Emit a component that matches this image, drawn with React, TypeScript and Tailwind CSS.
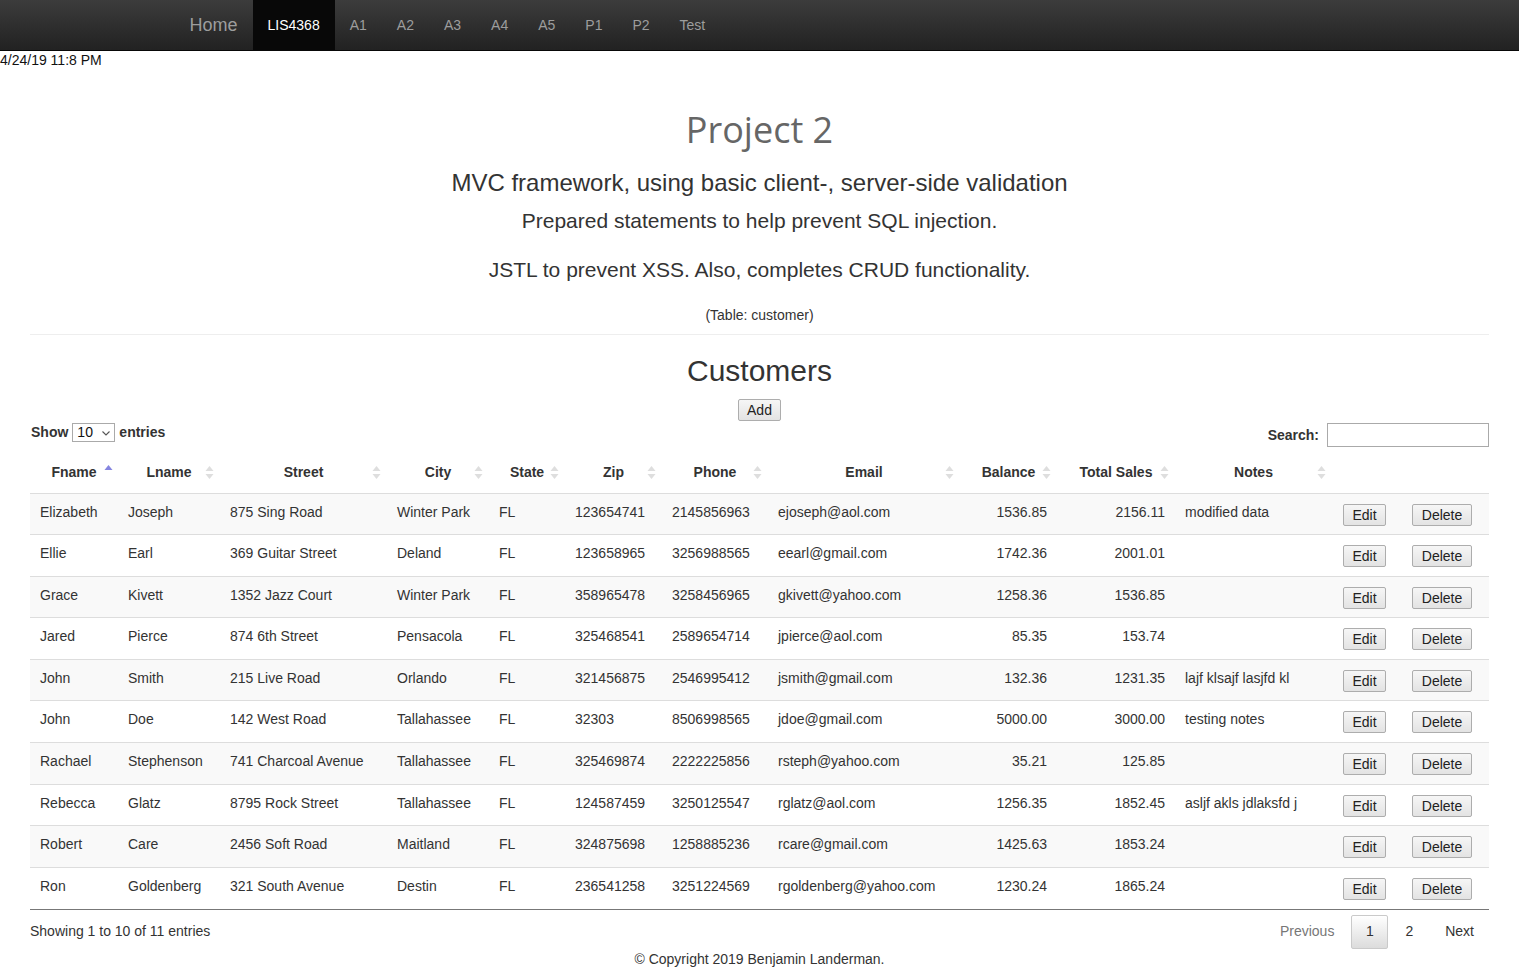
import React from "react";

type Customer = {
  fname: string;
  lname: string;
  street: string;
  city: string;
  state: string;
  zip: string;
  phone: string;
  email: string;
  balance: string;
  sales: string;
  notes: string;
};

const customers: Customer[] = [
  { fname: "Elizabeth", lname: "Joseph", street: "875 Sing Road", city: "Winter Park", state: "FL", zip: "123654741", phone: "2145856963", email: "ejoseph@aol.com", balance: "1536.85", sales: "2156.11", notes: "modified data" },
  { fname: "Ellie", lname: "Earl", street: "369 Guitar Street", city: "Deland", state: "FL", zip: "123658965", phone: "3256988565", email: "eearl@gmail.com", balance: "1742.36", sales: "2001.01", notes: "" },
  { fname: "Grace", lname: "Kivett", street: "1352 Jazz Court", city: "Winter Park", state: "FL", zip: "358965478", phone: "3258456965", email: "gkivett@yahoo.com", balance: "1258.36", sales: "1536.85", notes: "" },
  { fname: "Jared", lname: "Pierce", street: "874 6th Street", city: "Pensacola", state: "FL", zip: "325468541", phone: "2589654714", email: "jpierce@aol.com", balance: "85.35", sales: "153.74", notes: "" },
  { fname: "John", lname: "Smith", street: "215 Live Road", city: "Orlando", state: "FL", zip: "321456875", phone: "2546995412", email: "jsmith@gmail.com", balance: "132.36", sales: "1231.35", notes: "lajf klsajf lasjfd kl" },
  { fname: "John", lname: "Doe", street: "142 West Road", city: "Tallahassee", state: "FL", zip: "32303", phone: "8506998565", email: "jdoe@gmail.com", balance: "5000.00", sales: "3000.00", notes: "testing notes" },
  { fname: "Rachael", lname: "Stephenson", street: "741 Charcoal Avenue", city: "Tallahassee", state: "FL", zip: "325469874", phone: "2222225856", email: "rsteph@yahoo.com", balance: "35.21", sales: "125.85", notes: "" },
  { fname: "Rebecca", lname: "Glatz", street: "8795 Rock Street", city: "Tallahassee", state: "FL", zip: "124587459", phone: "3250125547", email: "rglatz@aol.com", balance: "1256.35", sales: "1852.45", notes: "asljf akls jdlaksfd j" },
  { fname: "Robert", lname: "Care", street: "2456 Soft Road", city: "Maitland", state: "FL", zip: "324875698", phone: "1258885236", email: "rcare@gmail.com", balance: "1425.63", sales: "1853.24", notes: "" },
  { fname: "Ron", lname: "Goldenberg", street: "321 South Avenue", city: "Destin", state: "FL", zip: "236541258", phone: "3251224569", email: "rgoldenberg@yahoo.com", balance: "1230.24", sales: "1865.24", notes: "" },
];

const navItems = ["A1", "A2", "A3", "A4", "A5", "P1", "P2", "Test"];

const headers = [
  { label: "Fname", w: "w-[88px]", active: true },
  { label: "Lname", w: "w-[102px]" },
  { label: "Street", w: "w-[167px]" },
  { label: "City", w: "w-[102px]" },
  { label: "State", w: "w-[76px]" },
  { label: "Zip", w: "w-[97px]" },
  { label: "Phone", w: "w-[106px]" },
  { label: "Email", w: "w-[192px]" },
  { label: "Balance", w: "w-[97px]" },
  { label: "Total Sales", w: "w-[118px]" },
  { label: "Notes", w: "w-[157px]" },
];

function SortIcon({ active }: { active?: boolean }) {
  if (active) {
    return (
      <svg width="9" height="18" viewBox="0 0 9 18" className="absolute right-[5px] top-[8px]">
        <polygon points="4.5,2 8.5,7 0.5,7" fill="#8585e0" />
      </svg>
    );
  }
  return (
    <svg width="9" height="18" viewBox="0 0 9 18" className="absolute right-[6px] top-[9px]">
      <polygon points="4.5,2 8.5,7 0.5,7" fill="#dedede" />
      <polygon points="0.5,10 8.5,10 4.5,15" fill="#dedede" />
    </svg>
  );
}

function Btn({ children, w }: { children: React.ReactNode; w: string }) {
  return (
    <button className={`${w} h-[22px] text-[14px] leading-[20px] text-[#222] border border-[#adadad] bg-gradient-to-b from-[#f6f6f6] to-[#e3e3e3] rounded-[2px]`}>
      {children}
    </button>
  );
}

export default function App() {
  return (
    <div className="min-h-screen bg-white text-[#333] font-['Liberation_Sans',Arial,sans-serif] text-[14px]">
      {/* navbar */}
      <nav className="h-[51px] bg-gradient-to-b from-[#3c3c3c] to-[#222] border-b border-[#080808]">
        <div className="w-[1140px] mx-auto flex h-[50px] items-stretch">
          <span className="pr-[15px] flex items-center text-[18px] text-[#9d9d9d]">Home</span>
          <span className="px-[15px] flex items-center bg-[#080808] text-white">LIS4368</span>
          {navItems.map((n) => (
            <span key={n} className="px-[15px] flex items-center text-[#9d9d9d]">
              {n}
            </span>
          ))}
        </div>
      </nav>

      <div className="text-[14px] leading-[18px] text-[#111]">4/24/19 11:8 PM</div>

      {/* intro */}
      <div className="px-[30px] text-center">
        <h1 className="mt-[41px] text-[36px] leading-[40px] text-[#666] font-['Open_Sans',sans-serif]">Project 2</h1>
        <p className="mt-[18px] text-[24px] leading-[30px]">MVC framework, using basic client-, server-side validation</p>
        <p className="mt-[10px] text-[21px] leading-[26px]">Prepared statements to help prevent SQL injection.</p>
        <p className="mt-[23px] text-[21px] leading-[26px]">JSTL to prevent XSS. Also, completes CRUD functionality.</p>
        <p className="mt-[22px] leading-[20px]">(Table: customer)</p>
        <hr className="mt-[9px] border-t border-[#eee]" />
        <h2 className="mt-[18px] text-[30px] leading-[36px]">Customers</h2>
        <div className="mt-[10px] flex justify-center">
          <button className="h-[22px] w-[43px] text-[14px] leading-[20px] text-[#222] border border-[#adadad] bg-gradient-to-b from-[#f6f6f6] to-[#e3e3e3] rounded-[2px]">
            Add
          </button>
        </div>
      </div>

      {/* table controls */}
      <div className="px-[30px] mt-[2px] flex justify-between items-start">
        <div className="flex items-center gap-[4px] font-bold h-[19px]">
          <span className="pl-[1px]">Show</span>
          <div className="relative h-[19px] w-[43px] border border-[#aaa] font-normal flex items-center pl-[4px] text-[14px] text-[#111]">
            10
            <svg width="8" height="5" viewBox="0 0 8 5" className="absolute right-[4px] top-[7px]">
              <polyline points="0.5,0.5 4,4 7.5,0.5" fill="none" stroke="#555" strokeWidth="1.1" />
            </svg>
          </div>
          <span>entries</span>
        </div>
        <div className="flex items-center gap-[8px] font-bold">
          <span>Search:</span>
          <div className="h-[24px] w-[162px] border border-[#aaa] bg-white" />
        </div>
      </div>

      {/* table */}
      <div className="px-[30px] mt-[8px]">
        <table className="w-full table-fixed border-collapse">
          <colgroup>
            {headers.map((h) => (
              <col key={h.label} className={h.w} />
            ))}
            <col className="w-[68px]" />
            <col className="w-[89px]" />
          </colgroup>
          <thead>
            <tr className="h-[38px] border-b border-[#ddd]">
              {headers.map((h) => (
                <th key={h.label} className="relative px-[10px] text-center font-bold text-[14px] leading-[20px] pb-[4px]">
                  {h.label}
                  <SortIcon active={h.active} />
                </th>
              ))}
              <th />
              <th />
            </tr>
          </thead>
          <tbody>
            {customers.map((c, i) => (
              <tr
                key={i}
                className={`h-[41.6px] ${i === 0 ? "" : "border-t border-[#ddd]"} ${i % 2 === 0 ? "bg-[#f9f9f9]" : "bg-white"}`}
              >
                {[c.fname, c.lname, c.street, c.city, c.state, c.zip, c.phone, c.email].map((v, k) => (
                  <td key={k} className="align-top px-[10px] pt-[8px] leading-[20px] whitespace-nowrap overflow-hidden">
                    {v}
                  </td>
                ))}
                <td className="align-top px-[10px] pt-[8px] leading-[20px] text-right">{c.balance}</td>
                <td className="align-top px-[10px] pt-[8px] leading-[20px] text-right">{c.sales}</td>
                <td className="align-top px-[10px] pt-[8px] leading-[20px] whitespace-nowrap">{c.notes}</td>
                <td className="align-top pl-[11px] pt-[10px]">
                  <Btn w="w-[43px]">Edit</Btn>
                </td>
                <td className="align-top pl-[12px] pt-[10px]">
                  <Btn w="w-[60px]">Delete</Btn>
                </td>
              </tr>
            ))}
          </tbody>
        </table>
        <div className="border-t border-[#777]" />

        {/* footer of table */}
        <div className="mt-[5px] flex justify-between items-center h-[34px]">
          <span>Showing 1 to 10 of 11 entries</span>
          <div className="flex items-center h-[34px] pr-[15px]">
            <span className="text-[#777]">Previous</span>
            <span className="ml-[17px] h-[34px] w-[37px] flex items-center justify-center border border-[#cacaca] rounded-[2px] bg-gradient-to-b from-white to-[#dcdcdc] text-[#333]">
              1
            </span>
            <span className="ml-[17px] text-[#333]">2</span>
            <span className="ml-[32px] text-[#333]">Next</span>
          </div>
        </div>

        <p className="text-center leading-[20px]">© Copyright 2019 Benjamin Landerman.</p>
      </div>
    </div>
  );
}
